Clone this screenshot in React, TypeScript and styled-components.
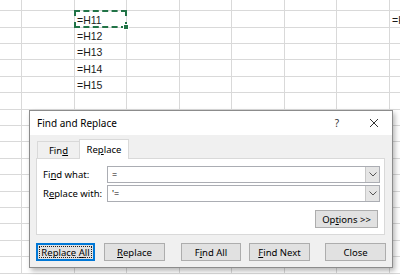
import React from "react";
import styled, { createGlobalStyle, css } from "styled-components";

const Global = createGlobalStyle`
  html, body { margin: 0; padding: 0; background: #ffffff; overflow: hidden; }
  #root { width: 400px; height: 275px; position: relative; overflow: hidden; }
`;

const COLS = [22, 53, 52, 53, 52, 53, 52, 53, 20];
const ROWS = [11, 17, 16, 16, 17, 16, 17, 16, 16, 17, 16, 17, 16, 16, 17, 16, 17];

const Sheet = styled.div`
  display: grid;
  grid-template-columns: ${COLS.map((c) => `${c}px`).join(" ")};
  grid-template-rows: ${ROWS.map((r) => `${r}px`).join(" ")};
  font-family: "Liberation Sans", Arial, sans-serif;
  font-size: 10.5px;
  color: #1a1a1a;
`;

const Cell = styled.div<{ $selected?: boolean }>`
  box-sizing: border-box;
  border-right: 1px solid #d9d9d9;
  border-bottom: 1px solid #d9d9d9;
  padding-left: 2px;
  display: flex;
  align-items: flex-end;
  padding-bottom: 1px;
  overflow: hidden;
  white-space: nowrap;
  position: relative;
  ${(p) =>
    p.$selected &&
    css`
      overflow: visible;
      &::after {
        content: "";
        position: absolute;
        left: -1px;
        top: -1px;
        right: -1px;
        bottom: -1px;
        border: 2px dashed #217346;
        pointer-events: none;
      }
      &::before {
        content: "";
        position: absolute;
        right: -3px;
        bottom: -3px;
        width: 4px;
        height: 4px;
        background: #217346;
        border: 1px solid #fff;
        z-index: 2;
      }
    `}
`;

const Dialog = styled.div`
  position: absolute;
  left: 29px;
  top: 110px;
  width: 364px;
  height: 158px;
  box-sizing: border-box;
  border: 1px solid #8c8c8c;
  background: #f0f0f0;
  box-shadow: 2px 3px 5px rgba(0, 0, 0, 0.28);
  font-family: "Noto Sans", "Open Sans", sans-serif;
  font-size: 9.5px;
  color: #000;
  display: flex;
  flex-direction: column;
`;

const TitleBar = styled.div`
  height: 24px;
  background: #ffffff;
  display: flex;
  align-items: center;
  padding-left: 7px;
  padding-right: 8px;
  font-size: 10px;
`;

const Title = styled.span`
  flex: 1;
`;

const TitleButton = styled.span<{ $w: number; $mr?: number }>`
  width: ${(p) => p.$w}px;
  margin-right: ${(p) => p.$mr ?? 0}px;
  display: flex;
  justify-content: center;
  align-items: center;
  color: #333;
`;

const Body = styled.div`
  flex: 1;
  display: flex;
  flex-direction: column;
  padding: 4px 6px 0 6px;
`;

const TabRow = styled.div`
  display: flex;
  align-items: flex-end;
  height: 19px;
  padding-left: 1px;
`;

const Tab = styled.div<{ $active?: boolean }>`
  box-sizing: border-box;
  border: 1px solid #d9d9d9;
  border-bottom: none;
  display: flex;
  align-items: center;
  justify-content: center;
  ${(p) =>
    p.$active
      ? css`
          background: #fff;
          height: 20px;
          width: 50px;
          margin-bottom: -1px;
          position: relative;
          z-index: 1;
        `
      : css`
          background: #f0f0f0;
          height: 17px;
          width: 42px;
          border-right: none;
        `}
`;

const Panel = styled.div`
  box-sizing: border-box;
  width: 349px;
  height: 77px;
  background: #fff;
  border: 1px solid #d9d9d9;
  padding: 7px 4px 0 6px;
  display: flex;
  flex-direction: column;
`;

const FieldRow = styled.div`
  display: flex;
  align-items: center;
  height: 17px;
  margin-bottom: 2px;
`;

const Label = styled.span`
  width: 64px;
`;

const Combo = styled.div`
  flex: 1;
  box-sizing: border-box;
  height: 17px;
  border: 1px solid #abadb3;
  display: flex;
  align-items: center;
  background: #fff;
`;

const ComboText = styled.span`
  flex: 1;
  padding-left: 4px;
  font-size: 9px;
`;

const ComboButton = styled.span`
  width: 14px;
  height: 15px;
  box-sizing: border-box;
  background: #e5e5e5;
  border-left: 1px solid #c8c8c8;
  display: flex;
  align-items: center;
  justify-content: center;
`;

const OptionsRow = styled.div`
  display: flex;
  justify-content: flex-end;
  margin-top: 6px;
  padding-right: 2px;
`;

const Button = styled.div<{ $w: number; $ml?: number; $default?: boolean }>`
  box-sizing: border-box;
  width: ${(p) => p.$w}px;
  height: 18px;
  margin-left: ${(p) => p.$ml ?? 0}px;
  background: #e1e1e1;
  border: 1px solid #adadad;
  display: flex;
  align-items: center;
  justify-content: center;
  position: relative;
  ${(p) =>
    p.$default &&
    css`
      border: 2px solid #0078d7;
      &::after {
        content: "";
        position: absolute;
        inset: 1px;
        border: 1px dotted #222;
      }
    `}
`;

const ButtonLabel = styled.span`
  white-space: pre;
`;

const ButtonRow = styled.div`
  display: flex;
  margin-top: 8px;
`;

const U = styled.span`
  text-decoration: underline;
  text-underline-offset: 1px;
`;

const Chevron = () => (
  <svg width="8" height="5" viewBox="0 0 8 5">
    <path d="M0.5 0.5 L4 4 L7.5 0.5" fill="none" stroke="#555" strokeWidth="1" />
  </svg>
);

const CloseX = () => (
  <svg width="10" height="10" viewBox="0 0 10 10">
    <path d="M1 1 L9 9 M9 1 L1 9" stroke="#333" strokeWidth="1" />
  </svg>
);

export default function App() {
  const rows = ROWS.length;
  const cells: React.ReactNode[] = [];
  for (let r = 0; r < rows; r++) {
    for (let c = 0; c < COLS.length; c++) {
      let content: React.ReactNode = null;
      let selected = false;
      if (c === 2 && r >= 1 && r <= 5) content = `=H${10 + r}`;
      if (c === 2 && r === 1) selected = true;
      if (c === 8 && r === 1) content = "=H";
      cells.push(
        <Cell key={`${r}-${c}`} $selected={selected}>
          {content}
        </Cell>
      );
    }
  }
  return (
    <>
      <Global />
      <Sheet>{cells}</Sheet>
      <Dialog>
        <TitleBar>
          <Title>Find and Replace</Title>
          <TitleButton $w={14} $mr={20}>?</TitleButton>
          <TitleButton $w={20}>
            <CloseX />
          </TitleButton>
        </TitleBar>
        <Body>
          <TabRow>
            <Tab>
              <ButtonLabel>
                Fin<U>d</U>
              </ButtonLabel>
            </Tab>
            <Tab $active>
              <ButtonLabel>
                Re<U>p</U>lace
              </ButtonLabel>
            </Tab>
          </TabRow>
          <Panel>
            <FieldRow>
              <Label>
                Fi<U>n</U>d what:
              </Label>
              <Combo>
                <ComboText>=</ComboText>
                <ComboButton>
                  <Chevron />
                </ComboButton>
              </Combo>
            </FieldRow>
            <FieldRow>
              <Label>
                R<U>e</U>place with:
              </Label>
              <Combo>
                <ComboText>'=</ComboText>
                <ComboButton>
                  <Chevron />
                </ComboButton>
              </Combo>
            </FieldRow>
            <OptionsRow>
              <Button $w={63}>
                <ButtonLabel>
                  Op<U>t</U>ions {">>"}
                </ButtonLabel>
              </Button>
            </OptionsRow>
          </Panel>
          <ButtonRow>
            <Button $w={59} $default>
              <ButtonLabel>
                Replace <U>A</U>ll
              </ButtonLabel>
            </Button>
            <Button $w={61} $ml={9}>
              <ButtonLabel>
                <U>R</U>eplace
              </ButtonLabel>
            </Button>
            <Button $w={60} $ml={16}>
              <ButtonLabel>
                F<U>i</U>nd All
              </ButtonLabel>
            </Button>
            <Button $w={61} $ml={8}>
              <ButtonLabel>
                <U>F</U>ind Next
              </ButtonLabel>
            </Button>
            <Button $w={61} $ml={15}>
              <ButtonLabel>Close</ButtonLabel>
            </Button>
          </ButtonRow>
        </Body>
      </Dialog>
    </>
  );
}
